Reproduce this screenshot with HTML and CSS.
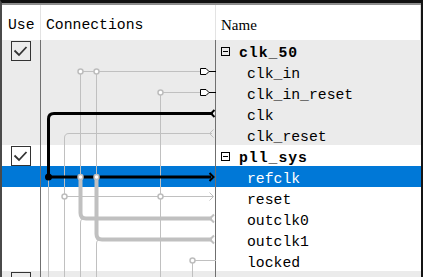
FILE: index.html
```html
<!DOCTYPE html>
<html lang="en">
<head>
    <meta charset="UTF-8">
    <title>Connections</title>
    <link rel="stylesheet" href="styles.css">
</head>
<body>
    <div class="tree">
        <div class="head">
            <div class="hcell h-use">Use</div>
            <div class="hcell h-conn">Connections</div>
            <div class="hcell h-name">Name</div>
        </div>
        <div class="rows">
            <div class="row group shade">
                <div class="use"><span class="box"><svg width="18" height="18" viewBox="0 0 18 18"><polyline points="2.5,8.5 7,13 14.5,5" /></svg></span></div>
                <div class="conn"></div>
                <div class="name"><span class="toggle"></span>clk_50</div>
            </div>
            <div class="row shade">
                <div class="use"></div><div class="conn"></div>
                <div class="name">clk_in</div>
            </div>
            <div class="row shade">
                <div class="use"></div><div class="conn"></div>
                <div class="name">clk_in_reset</div>
            </div>
            <div class="row shade">
                <div class="use"></div><div class="conn"></div>
                <div class="name">clk</div>
            </div>
            <div class="row shade">
                <div class="use"></div><div class="conn"></div>
                <div class="name">clk_reset</div>
            </div>
            <div class="row group">
                <div class="use"><span class="box"><svg width="18" height="18" viewBox="0 0 18 18"><polyline points="2.5,8.5 7,13 14.5,5" /></svg></span></div>
                <div class="conn"></div>
                <div class="name"><span class="toggle"></span>pll_sys</div>
            </div>
            <div class="row sel">
                <div class="use"></div><div class="conn"></div>
                <div class="name">refclk</div>
            </div>
            <div class="row">
                <div class="use"></div><div class="conn"></div>
                <div class="name">reset</div>
            </div>
            <div class="row">
                <div class="use"></div><div class="conn"></div>
                <div class="name">outclk0</div>
            </div>
            <div class="row">
                <div class="use"></div><div class="conn"></div>
                <div class="name">outclk1</div>
            </div>
            <div class="row">
                <div class="use"></div><div class="conn"></div>
                <div class="name">locked</div>
            </div>
            <div class="row group shade">
                <div class="use"><span class="box"><svg width="18" height="18" viewBox="0 0 18 18"><polyline points="2.5,8.5 7,13 14.5,5" /></svg></span></div>
                <div class="conn"></div>
                <div class="name"><span class="toggle"></span></div>
            </div>

            <svg class="wires" width="176" height="240" viewBox="40 40 176 240">
                <!-- thin grey wires -->
                <g class="thin">
                    <path d="M80.5 71.5 H200" />
                    <path d="M160.5 92.5 H200" />
                    <path d="M80.5 71.5 V177" />
                    <path d="M96.5 71.5 V177" />
                    <path d="M160.5 92.5 V280" />
                    <path d="M212 133.5 H69 Q64.5 133.5 64.5 138 V280" />
                    <path d="M64.5 196.5 H213" />
                    <path d="M48.5 177 V280" />
                    <path d="M84 218.5 Q80.5 218.5 80.5 223 V280" />
                    <path d="M100 239.5 Q96.5 239.5 96.5 244 V280" />
                    <path d="M192.5 260.5 H216 M192.5 260.5 V280" />
                    <path d="M213.5 129.5 L209.5 133.5 L213.5 137.5" />
                    <path d="M209.5 192.5 L213.5 196.5 L209.5 200.5" />
                </g>
                <!-- thick grey wires -->
                <g class="fat">
                    <path d="M80.5 179 V213 Q80.5 218.5 86 218.5 H212" />
                    <path d="M96.5 179 V234 Q96.5 239.5 102 239.5 H212" />
                </g>
                <g class="fat-end">
                    <path d="M214 214.5 L210 218.5 L214 222.5" />
                    <path d="M214 235.5 L210 239.5 L214 243.5" />
                </g>
                <!-- selected connection -->
                <path class="sel-wire" d="M213 113.5 H54 Q48.5 113.5 48.5 119 V177 H211" />
                <path class="sel-end" d="M214.5 110 L211 113.5 L214.5 117" />
                <path class="sel-end" d="M209.5 173 L213.5 177 L209.5 181" />
                <circle class="dot" cx="48.5" cy="177" r="3.5" />
                <!-- exported interfaces -->
                <polygon class="export" points="200.5,68.5 206,68.5 209,71.5 206,74.5 200.5,74.5" />
                <polygon class="export" points="200.5,89.5 206,89.5 209,92.5 206,95.5 200.5,95.5" />
                <path class="export-line" d="M209 71.5 H216 M209 92.5 H216" />
                <!-- connection points -->
                <g class="node">
                    <circle cx="80.5" cy="71.5" r="2.5" />
                    <circle cx="96.5" cy="71.5" r="2.5" />
                    <circle cx="160.5" cy="92.5" r="2.5" />
                    <circle cx="80.5" cy="177" r="2.5" />
                    <circle cx="96.5" cy="177" r="2.5" />
                    <circle cx="64.5" cy="196.5" r="2.5" />
                    <circle cx="160.5" cy="196.5" r="2.5" />
                    <circle cx="192.5" cy="260.5" r="2.5" />
                </g>
            </svg>
        </div>
    </div>
</body>
</html>
```

FILE: styles.css
```css
body {
    margin: 0;
    background: #fff;
    font-family: "Liberation Mono", "DejaVu Sans Mono", monospace;
    font-size: 14.75px;
    color: #000;
}

.tree {
    width: 423px;
    height: 277px;
    box-sizing: border-box;
    border-top: 3px solid #111;
    border-left: 2px solid #4a4a4a;
    border-right: 2px solid #141414;
    overflow: hidden;
    background: #fff;
}

.head {
    display: grid;
    grid-template-columns: 38px 175px 1fr;
    height: 35px;
    border-top: 2px solid #8e8e8e;
}

.hcell {
    padding-top: 12px;
    line-height: 16px;
    white-space: nowrap;
}

.h-use {
    padding-left: 6px;
}

.h-conn {
    border-left: 1px solid #e3e3e3;
    padding-left: 5px;
}

.h-name {
    border-left: 1px solid #e3e3e3;
    border-right: 1px solid #dcdcdc;
    padding-left: 5px;
    font-family: "Liberation Serif", serif;
    font-size: 15px;
}

.rows {
    position: relative;
}

.row {
    display: grid;
    grid-template-columns: 38px 175px 1fr;
    height: 21px;
}

.row.shade {
    background: #ebebeb;
}

.row.sel {
    background: #0078d7;
    color: #fff;
}

.use {
    padding: 1px 0 0 9px;
}

.conn {
    border-left: 1px solid #6f6f6f;
}

.name {
    border-left: 1px solid #6f6f6f;
    padding: 5px 0 0 31px;
    line-height: 16px;
    white-space: nowrap;
}

.group .name {
    padding-left: 5px;
    font-weight: bold;
    letter-spacing: 1px;
}

.toggle {
    display: inline-block;
    width: 9px;
    height: 9px;
    box-sizing: border-box;
    border: 1px solid #000;
    margin-right: 9px;
    vertical-align: 1px;
    background: linear-gradient(#000, #000) center / 5px 1px no-repeat;
}

.box {
    display: block;
    width: 20px;
    height: 20px;
    box-sizing: border-box;
    border: 1px solid #333;
}

.box svg {
    display: block;
}

.box polyline {
    fill: none;
    stroke: #333;
    stroke-width: 1.8;
}

.wires {
    position: absolute;
    left: 38px;
    top: 0;
    pointer-events: none;
}

.thin path {
    fill: none;
    stroke: #c0c0c0;
    stroke-width: 1;
}

.fat path {
    fill: none;
    stroke: #c0c0c0;
    stroke-width: 4;
}

.fat-end path {
    fill: none;
    stroke: #c0c0c0;
    stroke-width: 2;
}

.sel-wire {
    fill: none;
    stroke: #000;
    stroke-width: 3;
}

.sel-end {
    fill: none;
    stroke: #000;
    stroke-width: 2;
}

.dot {
    fill: #000;
}

.export {
    fill: #fff;
    stroke: #000;
    stroke-width: 1;
}

.export-line {
    fill: none;
    stroke: #000;
    stroke-width: 1;
}

.node circle {
    fill: #fff;
    stroke: #bdbdbd;
    stroke-width: 1.5;
}
```
